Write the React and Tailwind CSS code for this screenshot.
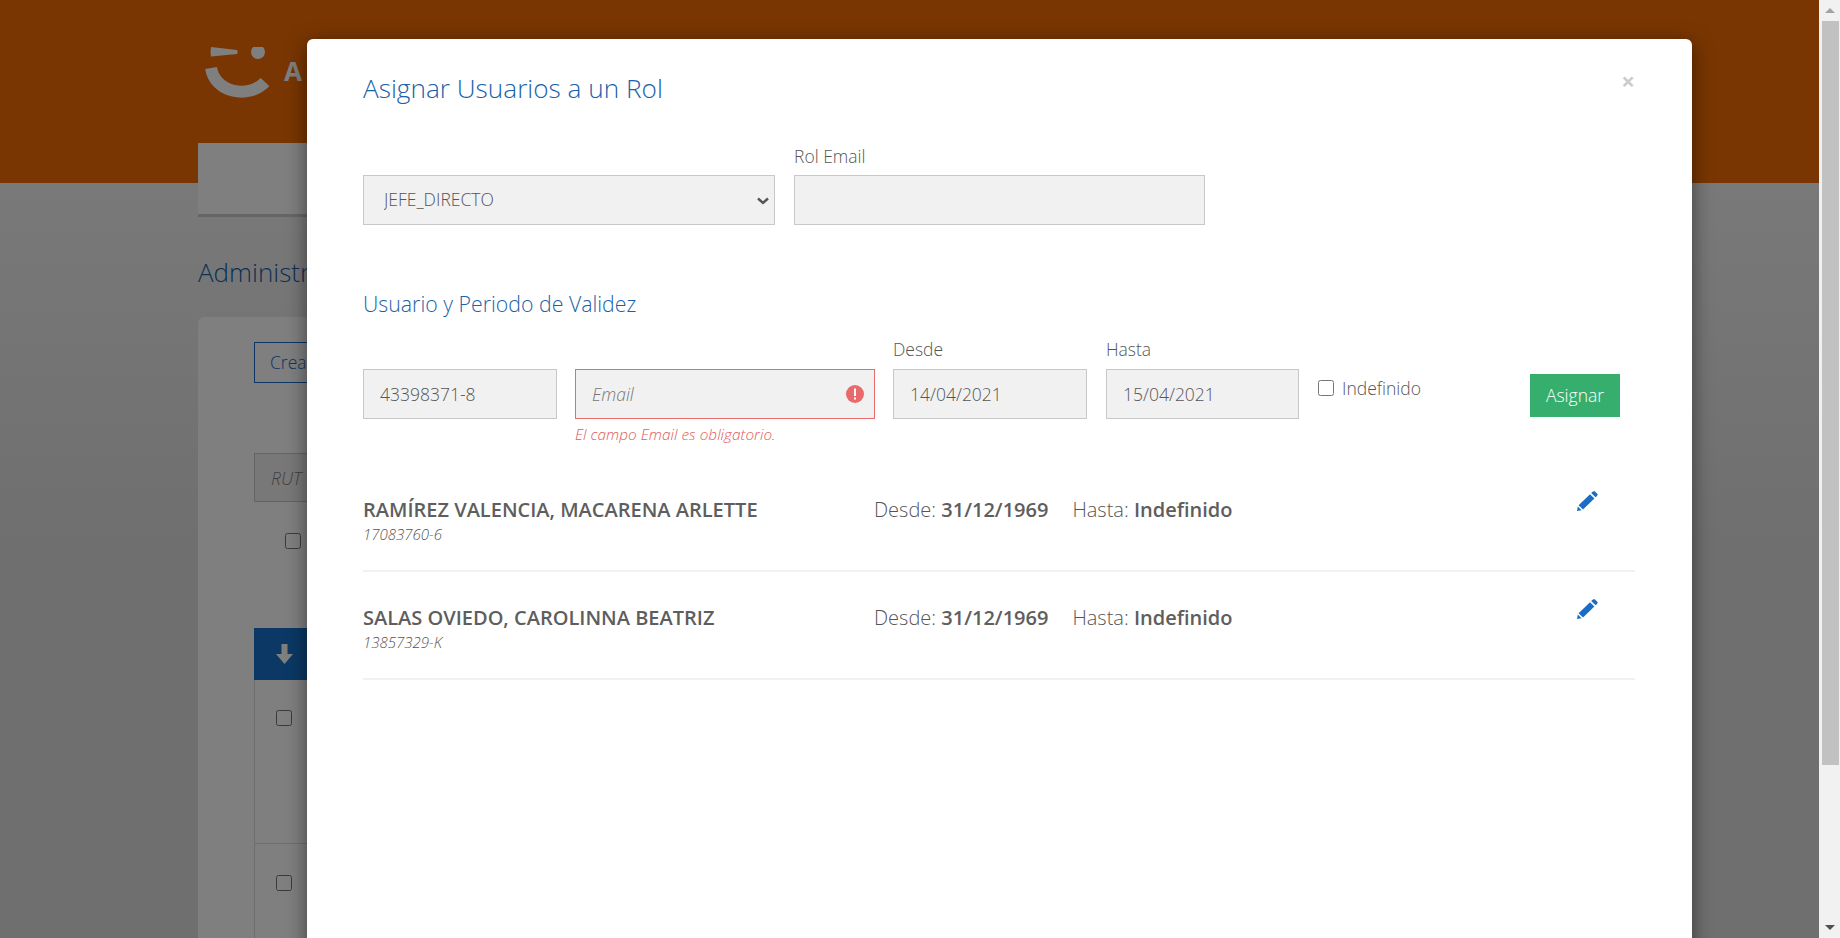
const inputClass = 'h-[50px] w-full border border-[#c8c8c8] bg-[#f1f1f1] px-4 text-[17.5px] font-light text-[#555] outline-none';

const Logo = () => (
  <svg width="64" height="54" viewBox="0 0 64 54" fill="none">
    <path d="M6 0 L32 3 Q33.5 5 32 7 L6 9.5 Q5 5 6 0Z" fill="#fff" />
    <circle cx="53" cy="5" r="7" fill="#fff" />
    <path d="M6 21 C10 46 44 52 60 35" stroke="#fff" strokeWidth="12" />
  </svg>
);

const Field = ({ label, value, width }) => (
  <div className={width}>
    <div className="mb-[8px] h-[24px] text-[17.5px] leading-6 font-light text-[#555]">{label}</div>
    <input readOnly value={value} className={inputClass} />
  </div>
);

const PencilIcon = () => (
  <svg width="21" height="20" viewBox="0 0 21 20" fill="#1a6cc4">
    <path d="M15.6 0.8 L17.4 0 L20.8 3.2 L20 5 L18.6 6.2 L14.2 2Z" />
    <path d="M13 3.2 L17.4 7.4 L6 18.4 L1.6 14.2Z" />
    <path d="M0.8 15.6 L4.6 19.2 L0 20Z" />
  </svg>
);

const ArrowDownIcon = () => (
  <svg width="17" height="20" viewBox="0 0 17 20" fill="#fff">
    <path d="M5.5 0 H11.5 V10 H17 L8.5 20 L0 10 H5.5Z" />
  </svg>
);

const AssignedUser = ({ name, rut }) => (
  <div className="relative flex h-[108px] border-b-2 border-[#f1f1f1]">
    <div className="w-[511px] pt-[32px]">
      <div className="text-xl leading-[28px] font-semibold text-[#5e5e5e]">{name}</div>
      <div className="text-[15px] leading-[20px] font-light text-[#555] italic">{rut}</div>
    </div>
    <div className="pt-[32px] text-xl leading-[28px] font-light text-[#555]">
      Desde: <b className="font-semibold text-[#5e5e5e]">31/12/1969</b>
      <span className="ml-6">Hasta: </span>
      <b className="font-semibold text-[#5e5e5e]">Indefinido</b>
    </div>
    <button className="absolute top-[27px] right-[37px]">
      <PencilIcon />
    </button>
  </div>
);

const BackgroundPage = () => (
  <div className="h-full bg-[linear-gradient(180deg,#f2f2f2_183px,#dedede_560px)]">
    <div className="flex h-[183px] items-start gap-[15px] bg-[#f26c04] pt-[47px] pl-[205px]">
      <Logo />
      <span className="mt-[8px] text-[26px] leading-8 font-bold text-white">A</span>
    </div>
    <div className="-mt-[40px] ml-[198px] h-[74px] w-[1400px] border-b-[3px] border-[#ccc] bg-white"></div>
    <h1 className="mt-[37px] ml-[198px] text-[26px] leading-9 font-light text-[#1a5fa8]">Administración</h1>
    <div className="mt-[27px] ml-[198px] h-[700px] w-[1400px] rounded-md bg-white pt-[25px] pl-[56px]">
      <button className="h-[41px] w-[200px] border border-[#1a6cc4] pl-[15px] text-left text-[17.5px] font-light text-[#1a6cc4]">Crear</button>
      <input readOnly placeholder="RUT" className="mt-[70px] block h-[49px] w-[300px] border border-[#c8c8c8] bg-[#f1f1f1] px-4 text-[17.5px] font-light italic" />
      <input type="checkbox" className="mt-[31px] ml-[31px] block h-4 w-4" />
      <div className="mt-[79px] flex h-[52px] items-center bg-[#1671cb] pl-[22px]">
        <ArrowDownIcon />
      </div>
      <div className="h-[164px] border-b border-l border-[#ddd] pt-[30px] pl-[21px]">
        <input type="checkbox" className="block h-4 w-4" />
      </div>
      <div className="h-[100px] border-l border-[#ddd] pt-[31px] pl-[21px]">
        <input type="checkbox" className="block h-4 w-4" />
      </div>
    </div>
  </div>
);

const Scrollbar = () => (
  <div className="flex h-full w-[21px] shrink-0 flex-col items-center bg-[#f1f1f1]">
    <div className="flex h-[21px] w-full items-center justify-center pl-[1px]">
      <div className="h-0 w-0 border-x-[5px] border-b-[5px] border-x-transparent border-b-[#a3a3a3]"></div>
    </div>
    <div className="ml-[1px] h-[744px] w-[17px] bg-[#c1c1c1]"></div>
    <div className="mt-auto flex h-[21px] w-full items-center justify-center pl-[1px]">
      <div className="h-0 w-0 border-x-[5px] border-t-[5px] border-x-transparent border-t-[#505050]"></div>
    </div>
  </div>
);

export default function App() {
  return (
    <div className="flex h-[938px] overflow-hidden font-['Open_Sans',sans-serif]">
      <main className="relative flex-1 overflow-hidden">
        <BackgroundPage />
        <div className="absolute inset-0 bg-black/50">
          <div className="relative mt-[39px] ml-[307px] h-[1000px] w-[1385px] rounded-md bg-white pt-[25px] pr-[57px] pl-[56px] shadow-[0_5px_20px_rgba(0,0,0,0.5)]">
            <button className="absolute top-[26px] right-[57px] text-2xl leading-8 font-bold text-[#ccc]">×</button>
            <h2 className="text-[26.2px] leading-[48px] font-light text-[#1a62a8]">Asignar Usuarios a un Rol</h2>

            <div className="mt-[63px] flex gap-[19px]">
              <div className="relative w-[412px]">
                <select defaultValue="JEFE_DIRECTO" className="h-[50px] w-full appearance-none border border-[#c8c8c8] bg-[#f1f1f1] pb-[2px] pl-5 text-[17.5px] font-light text-[#555]">
                  <option>JEFE_DIRECTO</option>
                </select>
                <svg className="pointer-events-none absolute top-[22px] right-[6px]" width="12" height="8" viewBox="0 0 12 8" fill="none">
                  <path d="M1 1.5 L6 6 L11 1.5" stroke="#555" strokeWidth="2.4" />
                </svg>
              </div>
              <div className="relative w-[411px]">
                <div className="absolute -top-[31px] left-0 text-[17.5px] leading-6 font-light text-[#555]">Rol Email</div>
                <input readOnly className={inputClass} />
              </div>
            </div>

            <h3 className="mt-[63px] text-[21.3px] leading-8 font-light text-[#1a62a8]">Usuario y Periodo de Validez</h3>

            <div className="mt-[17px] flex items-start">
              <Field label="" value="43398371-8" width="w-[194px]" />
              <div className="ml-[18px] w-[300px]">
                <div className="mb-[8px] h-[24px]"></div>
                <div className="relative">
                  <input readOnly placeholder="Email" className="h-[50px] w-full border border-[#e96b6b] bg-[#f1f1f1] px-4 text-[17.5px] font-light text-[#555] italic outline-none placeholder:text-[#777]" />
                  <svg className="absolute top-[16px] right-[11px]" width="18" height="18" viewBox="0 0 18 18">
                    <circle cx="9" cy="9" r="9" fill="#e86a6a" />
                    <rect x="8" y="3.5" width="2" height="7.5" fill="#fff" />
                    <rect x="8" y="12.5" width="2" height="2" fill="#fff" />
                  </svg>
                </div>
                <div className="mt-[6px] text-[15.4px] leading-5 font-light text-[#e4595a] italic">El campo Email es obligatorio.</div>
              </div>
              <Field label="Desde" value="14/04/2021" width="ml-[18px] w-[194px]" />
              <Field label="Hasta" value="15/04/2021" width="ml-[19px] w-[193px]" />
              <label className="mt-[39px] ml-[19px] flex w-[212px] items-center gap-[8px] text-[17.5px] leading-6 font-light text-[#555]">
                <input type="checkbox" className="h-4 w-4" />
                Indefinido
              </label>
              <button className="mt-[37px] h-[43px] w-[90px] bg-[#36ae6d] text-[17.5px] font-light text-white">Asignar</button>
            </div>

            <div className="relative mt-[19px]">
              <AssignedUser name="RAMÍREZ VALENCIA, MACARENA ARLETTE" rut="17083760-6" />
              <AssignedUser name="SALAS OVIEDO, CAROLINNA BEATRIZ" rut="13857329-K" />
            </div>
          </div>
        </div>
      </main>
      <Scrollbar />
    </div>
  );
}
